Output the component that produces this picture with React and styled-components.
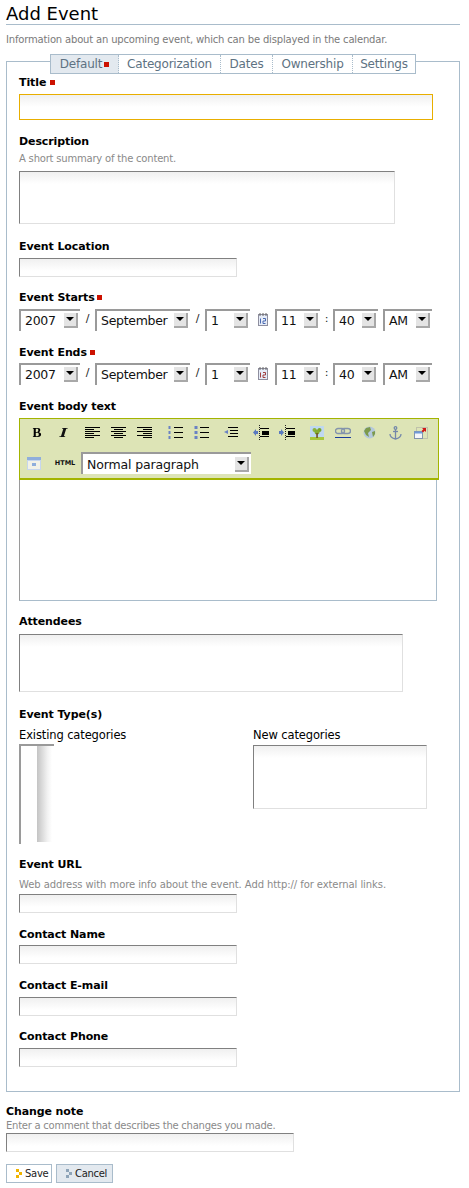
import React from "react";
import styled, { createGlobalStyle } from "styled-components";

const Global = createGlobalStyle`
  html, body { margin: 0; padding: 0; background: #fff; }
  body { font-family: "DejaVu Sans", Verdana, sans-serif; color: #000; }
`;

const Page = styled.div`
  width: 454px;
  padding: 0 9px 0 6px;
`;
const Title = styled.h1`
  margin: 0;
  height: 24px;
  border-bottom: 1px solid #a9bccb;
  font-size: 18px;
  line-height: 27px;
  font-weight: 400;
`;
const Intro = styled.p`
  margin: 6px 0 0;
  height: 16px;
  font-size: 10px;
  line-height: 17px;
  letter-spacing: -0.17px;
  color: #7a7a7a;
`;
const Panel = styled.div`
  margin-top: 14px;
  height: 1031px;
  box-sizing: border-box;
  border: 1px solid #a9bccb;
  padding: 0 12px;
`;
const Tabs = styled.div`
  display: flex;
  width: 366px;
  height: 20px;
  box-sizing: border-box;
  margin: -8px 0 1px 31px;
  border: 1px solid #a9bccb;
  background: #fff;
  font-size: 12px;
  letter-spacing: -0.2px;
  color: #5e7282;
`;
const Tab = styled.div`
  width: ${p => p.$w}px;
  box-sizing: border-box;
  display: flex;
  align-items: center;
  justify-content: center;
  gap: 2px;
  background: ${p => (p.$active ? "#e3e9ef" : "#fff")};
  border-right: ${p => (p.$last ? "0" : "1px dotted #a9bccb")};
`;
const Field = styled.div`
  margin-top: ${p => p.$top || 0}px;
`;
const Label = styled.label`
  display: block;
  height: 14px;
  margin-bottom: ${p => p.$after ?? 5}px;
  font-size: 11px;
  line-height: 16px;
  letter-spacing: -0.1px;
  font-weight: 700;
  color: #000;
`;
const Required = styled.span`
  display: inline-block;
  width: 5px;
  height: 5px;
  margin-left: ${p => p.$left ?? 4}px;
  vertical-align: 1px;
  background: #cc1100;
`;
const TabMarker = styled.span`
  width: 5px;
  height: 5px;
  flex: none;
  background: #cc1100;
`;
const Help = styled.div`
  height: 13px;
  margin: ${p => p.$before ?? 3}px 0 ${p => p.$after ?? 7}px;
  font-size: 10px;
  line-height: 15px;
  letter-spacing: ${p => p.$spacing ?? -0.2}px;
  color: #8a8a8a;
`;
const TextBox = styled.div`
  width: ${p => p.$w}px;
  height: ${p => p.$h}px;
  box-sizing: border-box;
  border: 1px solid;
  border-color: ${p => (p.$focus ? "#e8ae00" : "#808080 #e0e0e0 #e0e0e0 #808080")};
  background: linear-gradient(#f0f0f0, #ffffff 12px);
`;
const DateRow = styled.div`
  display: flex;
  align-items: flex-start;
  height: 22px;
`;
const Sep = styled.span`
  width: ${p => p.$w}px;
  text-align: center;
  font-size: 11px;
  line-height: 20px;
  color: #222;
`;
const SelectBox = styled.div`
  width: ${p => p.$w}px;
  height: 22px;
  margin-left: ${p => p.$left || 0}px;
  box-sizing: border-box;
  display: flex;
  align-items: center;
  justify-content: space-between;
  border-top: 2px solid #9a9a9a;
  border-left: 2px solid #9a9a9a;
  padding: 0 2px ${p => (p.$date ? 2 : 0)}px 4px;
  background: #fff;
  font-size: 12.5px;
  letter-spacing: ${p => (p.$date ? -0.3 : -0.15)}px;
  color: #111;
`;
const SelectArrow = styled.span`
  width: 14px;
  height: 15px;
  box-sizing: border-box;
  display: flex;
  align-items: center;
  justify-content: center;
  background: #e4e4e4;
  border-right: 2px solid #a8a8a8;
  border-bottom: 2px solid #a8a8a8;
  &::after {
    content: "";
    border-left: 4px solid transparent;
    border-right: 4px solid transparent;
    border-top: 4px solid #000;
  }
`;
const CalIcon = styled.svg`
  width: 10px;
  height: 13px;
  margin: 4px 7px 0 8px;
`;
const Toolbar = styled.div`
  width: 420px;
  height: 62px;
  box-sizing: border-box;
  border: 1px solid #a3b400;
  border-bottom-width: 2px;
  background: #dde4b6;
  padding: 0 0 0 4px;
`;
const ToolRow = styled.div`
  display: flex;
  align-items: center;
  height: ${p => p.$h}px;
  padding-top: ${p => p.$pad || 0}px;
  box-sizing: border-box;
`;
const ToolButton = styled.span`
  width: ${p => p.$w || 26}px;
  flex: none;
  display: flex;
  justify-content: center;
  margin-left: ${p => p.$left || 0}px;
`;
const HtmlTag = styled.span`
  font-size: 6.5px;
  font-weight: 700;
  color: #111;
`;
const Editor = styled.div`
  width: 418px;
  height: 121px;
  box-sizing: border-box;
  border: 1px solid #a9bccb;
  border-top: 0;
  border-left-color: #9a9a9a;
  background: #fff;
`;
const Categories = styled.div`
  display: flex;
`;
const CategoryCol = styled.div`
  width: ${p => p.$w}px;
`;
const SubLabel = styled.div`
  height: 14px;
  margin-bottom: ${p => p.$after}px;
  font-size: 11.5px;
  line-height: 16px;
  letter-spacing: -0.12px;
`;
const ListBox = styled.div`
  width: 35px;
  height: 100px;
  box-sizing: border-box;
  border-top: 2px solid #9a9a9a;
  border-left: 2px solid #9a9a9a;
  padding-right: 2px;
  display: flex;
  justify-content: flex-end;
`;
const ListTrack = styled.div`
  width: 15px;
  height: 96px;
  background: linear-gradient(90deg, #c4c4c4, #f2f2f2 70%, #fff);
`;
const Actions = styled.div`
  display: flex;
  gap: 4px;
  margin-top: 12px;
`;
const Button = styled.div`
  height: 19px;
  width: ${p => p.$w}px;
  box-sizing: border-box;
  display: flex;
  align-items: center;
  gap: 3px;
  padding-left: 9px;
  border: 1px solid #a9bccb;
  background: ${p => (p.$alt ? "#e3e9ef" : "#fff")};
  font-size: 10px;
  letter-spacing: -0.3px;
  color: #222;
`;
const Dots = styled.svg`
  width: 6px;
  height: 9px;
  flex: none;
`;

const Bold = () => (
  <svg width="10" height="9" viewBox="0 0 12 11"><path d="M1 0h6c2 0 3 1 3 2.500S9 5 8 5.200c1.600.2 3 1 3 2.800C11 10 9.500 11 7 11H1v-1h1V1H1zM4.500 1v3.800H6c1 0 1.600-.8 1.600-2S7 1 6 1zm0 4.800V10H6.400c1.100 0 1.800-.8 1.800-2.100s-.7-2.100-1.800-2.100z" fill="#000" fillRule="evenodd"/></svg>
);
const Italic = () => (
  <svg width="9" height="9" viewBox="0 0 10 11"><path d="M3.500 0H10v1H8.300L5.400 10H7v1H0v-1h1.900L4.800 1H3.200z" fill="#111"/></svg>
);
const Lines = ({ rows }) => (
  <svg width="15" height="11" viewBox="0 0 15 11">
    {rows.map(([x, w], i) => <rect key={i} x={x} y={i * 2} width={w} height="1" fill="#000" />)}
  </svg>
);
const List = ({ ordered }) => (
  <svg width="15" height="13" viewBox="0 0 15 13">
    {[1, 6, 11].map(y => (
      <g key={y}>
        <rect x="0.500" y={y - 1} width={ordered ? 2 : 3} height="3" fill="#6a82c4" />
        <rect x="6" y={y} width="9" height="1" fill="#000" />
      </g>
    ))}
  </svg>
);
const Indent = ({ flip }) => (
  <svg width="16" height="15" viewBox="0 0 16 15">
    {[3, 6, 8, 11].map((y, i) => {
      const mid = i === 1 || i === 2;
      return <rect key={y} x={mid ? 9 : 7} y={y} width={mid ? 7 : 9} height={mid ? 2 : 1} fill="#000" />;
    })}
    <path d="M6.500 0v15" stroke="#222" strokeDasharray="1 1" />
    <path d={flip ? "M0 6h2V4l3 3.500L2 11V9H0z" : "M5 6H3V4L0 7.500 3 11V9h2z"} fill="#5a7ac0" />
  </svg>
);
const Outdent = () => (
  <svg width="14" height="13" viewBox="0 0 14 13">
    {[1, 4, 7, 10].map(y => <rect key={y} x={y === 4 || y === 7 ? 6 : 4} y={y} width={y === 4 || y === 7 ? 8 : 10} height="1" fill="#000" />)}
    <path d="M4 4v4L0 6z" fill="#6a82c4" />
  </svg>
);
const ImageIcon = () => (
  <svg width="14" height="14" viewBox="0 0 14 14">
    <rect width="14" height="11" fill="#bfd8f0" />
    <rect y="11" width="14" height="3" fill="#a8c83c" />
    <circle cx="4.500" cy="4" r="2" fill="#8cb43a" />
    <circle cx="9.500" cy="4" r="2" fill="#7ca62c" />
    <circle cx="7" cy="6" r="2.500" fill="#84ac30" />
    <rect x="6.300" y="7" width="1.500" height="5" fill="#6b4a20" />
  </svg>
);
const LinkIcon = () => (
  <svg width="16" height="12" viewBox="0 0 16 12">
    <rect x="0.500" y="1.500" width="9" height="5" rx="2.500" fill="none" stroke="#8494ac" strokeWidth="1.400" />
    <rect x="6.500" y="1.500" width="9" height="5" rx="2.500" fill="none" stroke="#8494ac" strokeWidth="1.400" />
    <rect y="10" width="16" height="1" fill="#1a3c9c" />
  </svg>
);
const Globe = () => (
  <svg width="13" height="13" viewBox="0 0 13 13">
    <circle cx="6.500" cy="6.500" r="6" fill="#b4c8dc" />
    <path d="M3 2l4-1 1 3-3 3 1 4-3-2-2-4zM9 6l3-1v3l-2 3z" fill="#7c9a4c" />
  </svg>
);
const Anchor = () => (
  <svg width="13" height="14" viewBox="0 0 13 14" fill="none" stroke="#7488aa" strokeWidth="1.300">
    <circle cx="6.500" cy="2" r="1.300" />
    <path d="M6.500 3.500V13M1 8c0 3 3 4.500 5.500 5C9 12.500 12 11 12 8" />
    <path d="M4 5.500h5" />
  </svg>
);
const Fullscreen = () => (
  <svg width="14" height="12" viewBox="0 0 14 12">
    <rect x="2.500" y="0.500" width="11" height="11" fill="none" stroke="#a0a0a0" strokeDasharray="1 1" />
    <rect x="0.500" y="4.500" width="8" height="7" fill="#f4f6fa" stroke="#8294ac" />
    <rect x="0.500" y="4.500" width="8" height="2" fill="#6f9ad8" />
    <path d="M8 1h4v4l-1.300-1.300L9 5.400 7.600 4l1.700-1.700z" fill="#d01818" />
  </svg>
);
const TableIcon = () => (
  <svg width="14" height="13" viewBox="0 0 14 13">
    <rect width="14" height="13" fill="#c6d6ee" />
    <rect width="14" height="3" fill="#8faedc" />
    <rect x="1" y="4" width="12" height="8" fill="#f2f2e8" />
    <rect x="5" y="6" width="4" height="3" fill="#8faedc" />
  </svg>
);

const Calendar = ({ color }) => (
  <CalIcon viewBox="0 0 10 13">
    <rect x="0.500" y="1.500" width="9" height="11" fill="#e6ecf8" stroke="#8e8e9e" />
    <path d="M2 0v3M5 0v3M8 0v3" stroke="#666" />
    <path d="M2.500 5.500v5M5 5.500h2.500V8H5v2.500h2.500" stroke={color} fill="none" />
  </CalIcon>
);

const Select = ({ w, left, children }) => (
  <SelectBox $w={w} $left={left} $date>
    <span>{children}</span>
    <SelectArrow />
  </SelectBox>
);

const DateTime = ({ iconColor }) => (
  <DateRow>
    <Select w={61}>2007</Select>
    <Sep $w={15}>/</Sep>
    <Select w={95}>September</Select>
    <Sep $w={15}>/</Sep>
    <Select w={45}>1</Select>
    <Calendar color={iconColor} />
    <Select w={45}>11</Select>
    <Sep $w={13}>:</Sep>
    <Select w={45}>40</Select>
    <Select w={49} left={5}>AM</Select>
  </DateRow>
);

const Chevron = ({ c }) => (
  <Dots viewBox="0 0 6 9">
    <rect x="0" y="0" width="3" height="3" fill={c} />
    <rect x="3" y="3" width="3" height="3" fill={c} />
    <rect x="0" y="6" width="3" height="3" fill={c} />
  </Dots>
);

const alignRows = x => [[0, 15], [x, 9], [0, 15], [x, 9], [0, 15], [x, 9]];

export default function App() {
  return (
    <Page>
      <Global />
      <Title>Add Event</Title>
      <Intro>Information about an upcoming event, which can be displayed in the calendar.</Intro>
      <Panel>
        <Tabs>
          <Tab $w={68} $active>Default<TabMarker /></Tab>
          <Tab $w={102}>Categorization</Tab>
          <Tab $w={52}>Dates</Tab>
          <Tab $w={80}>Ownership</Tab>
          <Tab $w={62} $last>Settings</Tab>
        </Tabs>
        <Field>
          <Label>Title<Required /></Label>
          <TextBox $w={414} $h={26} $focus />
        </Field>
        <Field $top={14}>
          <Label $after={0}>Description</Label>
          <Help>A short summary of the content.</Help>
          <TextBox $w={376} $h={53} />
        </Field>
        <Field $top={15}>
          <Label>Event Location</Label>
          <TextBox $w={218} $h={19} />
        </Field>
        <Field $top={13}>
          <Label>Event Starts<Required $left={2} /></Label>
          <DateTime iconColor="#4a6ab0" />
        </Field>
        <Field $top={14}>
          <Label $after={4}>Event Ends<Required $left={3} /></Label>
          <DateTime iconColor="#a04040" />
        </Field>
        <Field $top={14}>
          <Label>Event body text</Label>
          <Toolbar>
            <ToolRow $h={27}>
              <ToolButton><Bold /></ToolButton>
              <ToolButton><Italic /></ToolButton>
              <ToolButton $left={3}><Lines rows={alignRows(0)} /></ToolButton>
              <ToolButton><Lines rows={alignRows(3)} /></ToolButton>
              <ToolButton><Lines rows={alignRows(6)} /></ToolButton>
              <ToolButton $left={5}><List ordered /></ToolButton>
              <ToolButton><List /></ToolButton>
              <ToolButton $left={4}><Outdent /></ToolButton>
              <ToolButton $left={4}><Indent /></ToolButton>
              <ToolButton><Indent flip /></ToolButton>
              <ToolButton $left={4}><ImageIcon /></ToolButton>
              <ToolButton><LinkIcon /></ToolButton>
              <ToolButton><Globe /></ToolButton>
              <ToolButton><Anchor /></ToolButton>
              <ToolButton><Fullscreen /></ToolButton>
            </ToolRow>
            <ToolRow $h={32} $pad={2}>
              <ToolButton $w={20}><TableIcon /></ToolButton>
              <ToolButton $w={20} $left={11}><HtmlTag>HTML</HtmlTag></ToolButton>
              <SelectBox $w={170} $left={6}>
                <span>Normal paragraph</span>
                <SelectArrow />
              </SelectBox>
            </ToolRow>
          </Toolbar>
          <Editor />
        </Field>
        <Field $top={13}>
          <Label $after={6}>Attendees</Label>
          <TextBox $w={384} $h={58} />
        </Field>
        <Field $top={15}>
          <Label $after={6}>Event Type(s)</Label>
          <Categories>
            <CategoryCol $w={234}>
              <SubLabel $after={3}>Existing categories</SubLabel>
              <ListBox><ListTrack /></ListBox>
            </CategoryCol>
            <CategoryCol $w={174}>
              <SubLabel $after={4}>New categories</SubLabel>
              <TextBox $w={174} $h={64} />
            </CategoryCol>
          </Categories>
        </Field>
        <Field $top={13}>
          <Label $after={0}>Event URL</Label>
          <Help $before={6} $after={4} $spacing={-0.08}>Web address with more info about the event. Add http:// for external links.</Help>
          <TextBox $w={218} $h={19} />
        </Field>
        <Field $top={14}>
          <Label $after={4}>Contact Name</Label>
          <TextBox $w={218} $h={19} />
        </Field>
        <Field $top={14}>
          <Label>Contact E-mail</Label>
          <TextBox $w={218} $h={19} />
        </Field>
        <Field $top={13}>
          <Label>Contact Phone</Label>
          <TextBox $w={218} $h={19} />
        </Field>
      </Panel>
      <Field $top={12}>
        <Label $after={0}>Change note</Label>
        <Help $before={0} $after={2} $spacing={-0.25}>Enter a comment that describes the changes you made.</Help>
        <TextBox $w={288} $h={19} />
      </Field>
      <Actions>
        <Button $w={46}><Chevron c="#f0b400" />Save</Button>
        <Button $w={57} $alt><Chevron c="#8ea4b8" />Cancel</Button>
      </Actions>
    </Page>
  );
}
